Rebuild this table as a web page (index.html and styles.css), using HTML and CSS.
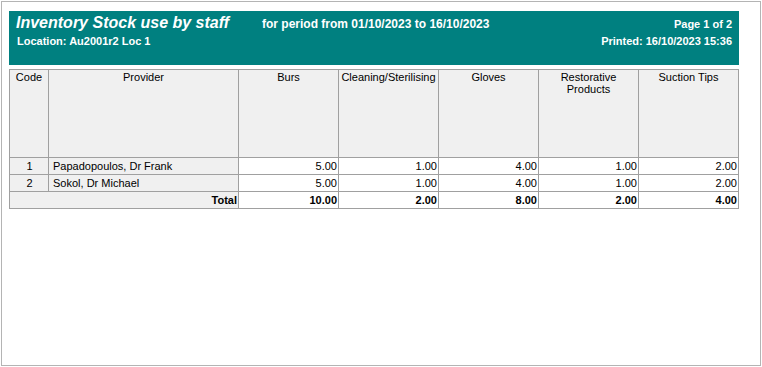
FILE: index.html
```html
<!DOCTYPE html>
<html>
<head>
<meta charset="utf-8">
<link rel="stylesheet" href="styles.css">
</head>
<body>
<div class="page">
  <div class="hdr">
    <div class="row1">
      <div class="title">Inventory Stock use by staff</div>
      <div class="period">for period from 01/10/2023 to 16/10/2023</div>
      <div class="pg">Page 1 of 2</div>
    </div>
    <div class="row2">
      <div class="loc">Location: Au2001r2 Loc 1</div>
      <div class="printed">Printed: 16/10/2023 15:36</div>
    </div>
  </div>
  <table class="grid">
    <colgroup>
      <col class="c-code"><col class="c-prov"><col class="c-num"><col class="c-num"><col class="c-num"><col class="c-num"><col class="c-num">
    </colgroup>
    <thead>
      <tr>
        <th>Code</th><th>Provider</th><th>Burs</th><th>Cleaning/Sterilising</th><th>Gloves</th><th>Restorative Products</th><th>Suction Tips</th>
      </tr>
    </thead>
    <tbody>
      <tr>
        <td class="code">1</td><td class="prov">Papadopoulos, Dr Frank</td><td class="num">5.00</td><td class="num">1.00</td><td class="num">4.00</td><td class="num">1.00</td><td class="num">2.00</td>
      </tr>
      <tr>
        <td class="code">2</td><td class="prov">Sokol, Dr Michael</td><td class="num">5.00</td><td class="num">1.00</td><td class="num">4.00</td><td class="num">1.00</td><td class="num">2.00</td>
      </tr>
      <tr class="total">
        <td class="tlabel" colspan="2">Total</td><td class="num">10.00</td><td class="num">2.00</td><td class="num">8.00</td><td class="num">2.00</td><td class="num">4.00</td>
      </tr>
    </tbody>
  </table>
</div>
</body>
</html>
```
FILE: styles.css
```css
html, body {
  margin: 0;
  padding: 0;
  background: #fff;
}
body {
  font-family: "Liberation Sans", Arial, sans-serif;
  color: #000;
}
.page {
  margin: 1px;
  width: 760px;
  height: 365px;
  box-sizing: border-box;
  border: 1px solid #b4b4b4;
  padding: 9px 21px 0 7px;
}
.hdr {
  background: #008080;
  color: #fff;
  height: 54px;
  box-sizing: border-box;
  padding: 3px 7px 0 7px;
  font-weight: bold;
}
.row1 {
  display: flex;
  align-items: baseline;
  line-height: 18px;
}
.title {
  width: 246px;
  font-size: 16px;
  font-style: italic;
}
.period {
  flex: 1;
  font-size: 12px;
}
.pg {
  font-size: 11px;
}
.row2 {
  display: flex;
  justify-content: space-between;
  margin-top: 1px;
  padding-left: 1px;
  font-size: 11px;
  line-height: 14px;
}
.grid {
  margin-top: 4px;
  border-collapse: collapse;
  table-layout: fixed;
  width: 730px;
  font-size: 11px;
}
.c-code { width: 39px; }
.c-prov { width: 190px; }
.c-num { width: 100px; }
.grid th, .grid td {
  border: 1px solid #a0a0a0;
  padding: 0;
}
.grid th {
  background: #f0f0f0;
  font-weight: normal;
  vertical-align: top;
  text-align: center;
  line-height: 12px;
  padding: 1px 2px 0;
  height: 88px;
  box-sizing: border-box;
}
.grid td {
  line-height: 13px;
  padding: 2px 1px 1px 2px;
  white-space: nowrap;
}
.grid td.code {
  background: #f0f0f0;
  text-align: center;
}
.grid td.prov {
  background: #f0f0f0;
  padding-left: 4px;
}
.grid td.num {
  text-align: right;
  background: #fff;
}
.total td {
  font-weight: bold;
}
.grid td.tlabel {
  background: #f0f0f0;
  text-align: right;
}
```
